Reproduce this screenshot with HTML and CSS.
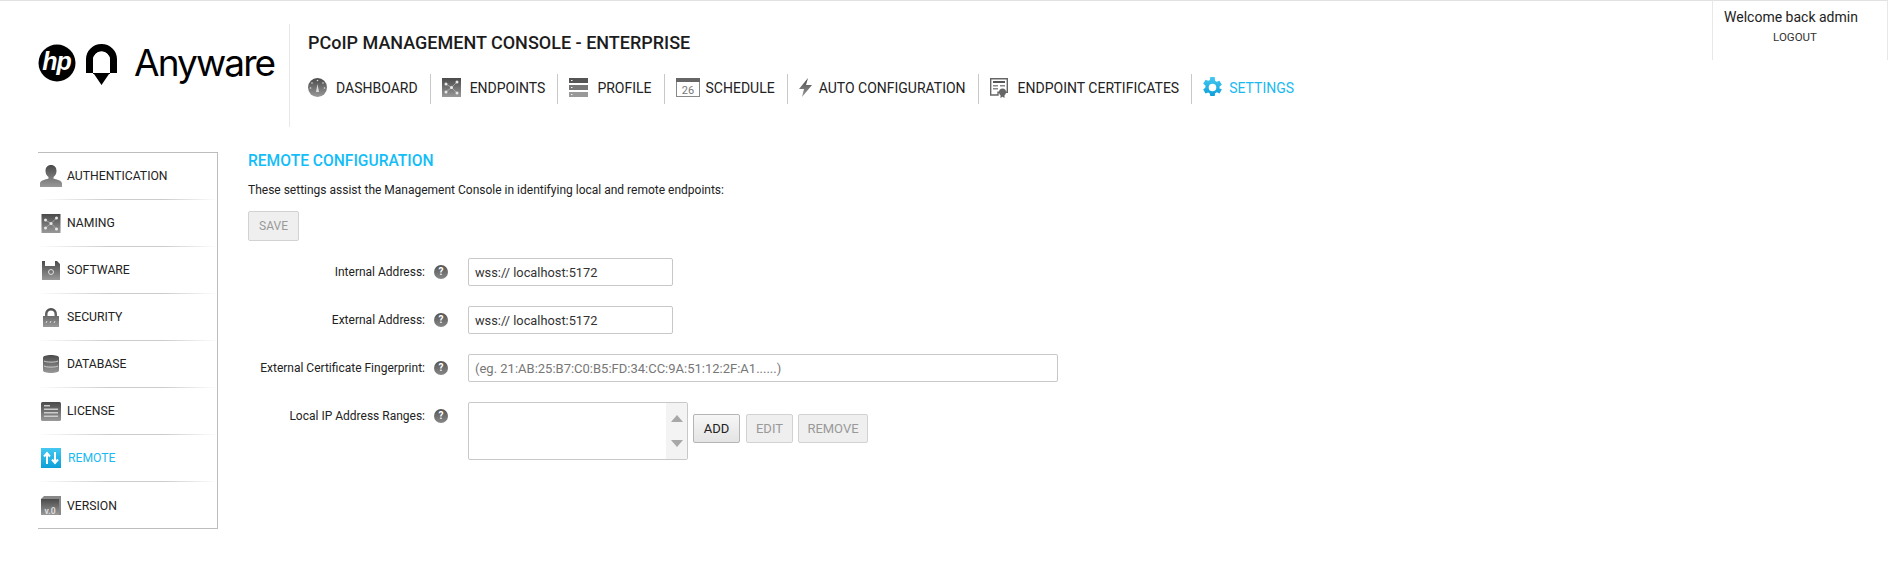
FILE: index.html
```html
<!DOCTYPE html>
<html lang="en">
<head>
<meta charset="utf-8">
<title>PCoIP Management Console</title>
<link rel="stylesheet" href="styles.css">
</head>
<body>
<svg class="defs" width="0" height="0" aria-hidden="true">
  <defs>
    <linearGradient id="g" x1="0" y1="0" x2="0" y2="1"><stop offset="0" stop-color="#4a4a4a"/><stop offset="1" stop-color="#999"/></linearGradient>
    <linearGradient id="b" x1="0" y1="0" x2="0" y2="1"><stop offset="0" stop-color="#45c8f2"/><stop offset="1" stop-color="#0c9fd8"/></linearGradient>
  </defs>
</svg>
<header class="top">
  <div class="logo">
    <svg class="hp" width="38" height="38" viewBox="0 0 38 38"><circle cx="19" cy="19" r="18.500" fill="#000"/><text x="18.500" y="26" text-anchor="middle" class="hp-text">hp</text></svg>
    <svg class="arch" width="31" height="42" viewBox="0 0 31 42"><path d="M0 29V15a15.500 15 0 0 1 31 0v14H24V16a8.500 8.500 0 0 0-17 0v13zM7 29h17v1h-17zM8 30h15l-7.500 11z" fill="#000"/><path d="M7 28V16a8.500 8.500 0 0 1 17 0v12z" fill="#fff"/></svg>
    <span class="word">Anyware</span>
  </div>
  <div class="titles">
    <h1>PCoIP MANAGEMENT CONSOLE - ENTERPRISE</h1>
    <nav class="nav">
      <a class="nav-item i1"><svg width="19" height="19" viewBox="0 0 19 19"><circle cx="9.500" cy="9.500" r="9.500" fill="url(#g)"/><path d="M9.500 6 8 14h3z" fill="#ddd"/><g fill="#ddd"><circle cx="9.500" cy="2.500" r=".8"/><circle cx="4" cy="5" r=".8"/><circle cx="15" cy="5" r=".8"/><circle cx="2.500" cy="10" r=".8"/><circle cx="16.500" cy="10" r=".8"/></g></svg>DASHBOARD</a>
      <a class="nav-item i2"><svg width="19" height="19" viewBox="0 0 19 19"><rect width="19" height="19" fill="url(#g)"/><path d="M4 6l5.500 3.500L15 4M4 14l5.500-4.500L15 15" stroke="#bbb" stroke-width=".7" fill="none"/><g fill="#e8e8e8"><circle cx="4" cy="6" r="1.500"/><circle cx="15" cy="4" r="1.500"/><circle cx="9.500" cy="9.500" r="1.500"/><circle cx="4" cy="14" r="1.500"/><circle cx="15" cy="15" r="1.500"/></g></svg>ENDPOINTS</a>
      <a class="nav-item i3"><svg width="19" height="19" viewBox="0 0 19 19"><rect width="19" height="5" fill="#555"/><rect y="7" width="19" height="5" fill="#777"/><rect y="14" width="19" height="5" fill="#999"/><g fill="#eee"><rect x="2" y="2" width="1.500" height="1"/><rect x="2" y="9" width="1.500" height="1"/><rect x="2" y="16" width="1.500" height="1"/></g></svg>PROFILE</a>
      <a class="nav-item i4"><svg width="24" height="19" viewBox="0 0 24 19"><rect x=".5" y=".5" width="23" height="18" fill="#fff" stroke="#888"/><rect width="24" height="4" fill="#666"/><text x="12" y="16" text-anchor="middle" class="cal">26</text></svg>SCHEDULE</a>
      <a class="nav-item i5"><svg width="13" height="19" viewBox="0 0 13 19"><path d="M9 0 0 11h5l-2 8 10-12H7z" fill="url(#g)"/></svg>AUTO CONFIGURATION</a>
      <a class="nav-item i6"><svg width="18" height="20" viewBox="0 0 18 20"><path d="M.7.7h16.600v13.600H8V17H.7z" fill="#fff" stroke="#666" stroke-width="1.400"/><rect x="3" y="3" width="12" height="2" fill="#555"/><rect x="3" y="7" width="5" height="1.500" fill="#888"/><rect x="10" y="7" width="5" height="1.500" fill="#888"/><rect x="3" y="10" width="5" height="1.500" fill="#888"/><circle cx="12.500" cy="14" r="3.500" fill="#666"/><path d="M10.500 16v4l2-1.300 2 1.300v-4z" fill="#666"/></svg>ENDPOINT CERTIFICATES</a>
      <a class="nav-item i7 on"><svg width="19" height="21" viewBox="2 1 20 22"><path d="M19.400 13a7.700 7.700 0 0 0 0-2l2.400-1.900-2.500-4.300-2.900 1.100a7.700 7.700 0 0 0-1.700-1L14.300 1H9.700l-.5 3a7.700 7.700 0 0 0-1.700 1L4.700 3.800 2.200 8.100 4.600 10a7.700 7.700 0 0 0 0 2l-2.400 2 2.500 4.200 2.800-1a7.700 7.700 0 0 0 1.700 1l.5 2.800h4.600l.5-3a7.700 7.700 0 0 0 1.700-1l2.900 1.200 2.500-4.300zM12 16a4 4 0 1 1 0-8 4 4 0 0 1 0 8z" fill="url(#b)"/></svg>SETTINGS</a>
    </nav>
  </div>
  <div class="user">
    <div class="welcome">Welcome back admin</div>
    <a class="logout">LOGOUT</a>
  </div>
</header>
<div class="page">
  <aside class="side">
    <a class="side-item"><svg width="22" height="22" viewBox="0 0 22 22"><path d="M11 0c3.500 0 5.500 2.500 5.500 6 0 3-1.500 5-3 6v1.500c3 1 8.500 2 8.500 5V22H0v-3.500c0-3 5.500-4 8.500-5V12c-1.500-1-3-3-3-6 0-3.500 2-6 5.500-6z" fill="url(#g)"/></svg><span>AUTHENTICATION</span></a>
    <a class="side-item"><svg width="20" height="19" viewBox="0 0 19 19"><rect width="19" height="19" fill="url(#g)"/><path d="M4 6l5.500 3.500L15 4M4 14l5.500-4.500L15 15" stroke="#bbb" stroke-width=".7" fill="none"/><g fill="#e8e8e8"><circle cx="4" cy="6" r="1.500"/><circle cx="15" cy="4" r="1.500"/><circle cx="9.500" cy="9.500" r="1.500"/><circle cx="4" cy="14" r="1.500"/><circle cx="15" cy="15" r="1.500"/></g></svg><span>NAMING</span></a>
    <a class="side-item"><svg width="18" height="19" viewBox="0 0 18 19"><path d="M0 0h3v5h10V0h2l3 3v16H0z" fill="url(#g)"/><circle cx="9" cy="11" r="2.500" fill="none" stroke="#ddd"/></svg><span>SOFTWARE</span></a>
    <a class="side-item"><svg width="16" height="19" viewBox="0 0 16 19"><path d="M0 8h2V6a6 6 0 0 1 12 0v2h2v11H0zM4.500 8h7V6a3.500 3.500 0 0 0-7 0z" fill="url(#g)"/><path d="M3 15l1-2M7 15l1-2M11 15l1-2" stroke="#ddd" fill="none"/></svg><span>SECURITY</span></a>
    <a class="side-item"><svg width="16" height="18" viewBox="0 0 16 18"><path d="M0 2.500C0 1 3.500 0 8 0s8 1 8 2.500V15.500c0 1.500-3.500 2.500-8 2.500s-8-1-8-2.500z" fill="url(#g)"/><path d="M1 6c2 1.500 12 1.500 14 0M1 11c2 1.500 12 1.500 14 0" stroke="#ccc" fill="none"/></svg><span>DATABASE</span></a>
    <a class="side-item"><svg width="20" height="19" viewBox="0 0 20 19"><rect width="20" height="19" rx="1.500" fill="url(#g)"/><g fill="#ccc"><rect x="3" y="3" width="6" height="1.500"/><rect x="3" y="6.500" width="14" height="1.500"/><rect x="3" y="10" width="14" height="1.500"/><rect x="3" y="13.500" width="14" height="1.500"/></g></svg><span>LICENSE</span></a>
    <a class="side-item on"><svg width="20" height="20" viewBox="0 0 20 20"><rect width="20" height="20" fill="url(#b)"/><path d="M6 16V6M3 8.500 6 5l3 3.500M14 4v10M11 11.500l3 3.500 3-3.500" fill="none" stroke="#fff" stroke-width="2"/></svg><span>REMOTE</span></a>
    <a class="side-item"><svg width="20" height="19" viewBox="0 0 20 19"><path d="M3 0h17v19H0V3z" fill="#888"/><rect y="3" width="18" height="16" fill="url(#g)"/><text x="9" y="18" text-anchor="middle" class="ver">v.0</text></svg><span>VERSION</span></a>
  </aside>
  <main class="main">
    <h2>REMOTE CONFIGURATION</h2>
    <p class="desc">These settings assist the Management Console in identifying local and remote endpoints:</p>
    <button class="btn save" disabled>SAVE</button>
    <form class="form">
      <label class="lbl">Internal Address:</label><span class="help">?</span><input class="field short" value="wss:// localhost:5172">
      <label class="lbl">External Address:</label><span class="help">?</span><input class="field short" value="wss:// localhost:5172">
      <label class="lbl">External Certificate Fingerprint:</label><span class="help">?</span><input class="field long" placeholder="(eg. 21:AB:25:B7:C0:B5:FD:34:CC:9A:51:12:2F:A1......)">
      <label class="lbl">Local IP Address Ranges:</label><span class="help">?</span>
      <div class="ranges">
        <div class="list"><div class="scroll"><i class="up"></i><i class="down"></i></div></div>
        <div class="actions">
          <button type="button" class="btn add">ADD</button>
          <button type="button" class="btn edit" disabled>EDIT</button>
          <button type="button" class="btn remove" disabled>REMOVE</button>
        </div>
      </div>
    </form>
  </main>
</div>
</body>
</html>
```

FILE: styles.css
```css
* { box-sizing: border-box; }
html, body { margin: 0; padding: 0; background: #fff; }
body { font-family: Roboto, "Liberation Sans", sans-serif; color: #222; border-top: 1px solid #e2e2e2; height: 574px; overflow: hidden; }
.defs { position: absolute; }
a { color: inherit; text-decoration: none; }

.top { display: flex; height: 151px; }
.logo { width: 289px; padding: 43px 0 0 38px; display: flex; align-items: flex-start; flex: none; }
.hp { display: block; flex: none; }
.hp-text { font: italic 700 25px "Liberation Sans", sans-serif; fill: #fff; letter-spacing: -1px; }
.arch { display: block; margin-left: 10px; flex: none; }
.word { font: 400 37px/36px Inter, sans-serif; color: #000; letter-spacing: -1.900px; margin: 1px 0 0 17px; }
.titles { margin-top: 23px; height: 103px; border-left: 1px solid #e8e8e8; padding-left: 18px; }
h1 { margin: 9px 0 0; font: 500 18px/20px Roboto, sans-serif; color: #1c1c1c; white-space: nowrap; }
.nav { display: flex; margin-top: 21px; height: 30px; }
.nav-item { display: flex; align-items: center; gap: 9px; padding: 0 12px 3px 11px; font-size: 14px; color: #222; border-right: 1px solid #c8c8c8; white-space: nowrap; }
.i1 { padding-left: 0; }
.i4 { gap: 6px; }
.i5 { gap: 7px; }
.i6 { gap: 10px; }
.i7 { gap: 7px; padding-left: 11px; border-right: 0; }
.nav-item.on { color: #19b9f1; }
.cal { font: 11px Roboto, sans-serif; fill: #777; }
.user { margin-left: auto; width: 176px; height: 59px; border-left: 1px solid #e8e8e8; border-right: 1px solid #e8e8e8; padding: 8px 18px 0 0; text-align: center; }
.welcome { font-size: 14px; line-height: 17px; color: #222; }
.logout { display: block; font-size: 11.500px; line-height: 14px; margin: 4px 0 0 8px; color: #333; }

.page { display: flex; }
.side { margin-left: 38px; width: 180px; height: 377px; border: solid #bdbdbd; border-width: 1px 1px 1px 0; flex: none; }
.side-item { height: 47px; display: flex; align-items: center; font-size: 12.200px; border-bottom: 1px solid; border-image: linear-gradient(90deg, #fff, #ccc 40%, #ccc 70%, #fff) 1; }
.side-item:last-child { border-bottom: 0; }
.side-item svg { margin-left: 2px; width: 22px; flex: none; }
.side-item span { margin-left: 5px; }
.side-item.on { color: #19b9f1; }
.side-item.on span { margin-left: 6px; }
.ver { font: 700 8.500px Roboto, sans-serif; fill: #ddd; }

.main { margin-left: 30px; }
h2 { margin: 0; font: 500 15.600px/18px Roboto, sans-serif; color: #13bdf7; }
.desc { margin: 12px 0 0; font-size: 12px; line-height: 16px; color: #222; }
.btn { height: 29px; padding: 0; background: #efefef; border: 1px solid #d2d2d2; border-radius: 2px; font: 13px Roboto, sans-serif; color: #999; }
.save { display: block; margin-top: 13px; width: 51px; height: 30px; font-size: 12px; }
.form { display: grid; grid-template-columns: 177px 14px auto; column-gap: 9px; grid-auto-rows: 28px; row-gap: 20px; margin-top: 17px; align-items: center; }
.lbl { font-size: 12px; text-align: right; color: #222; white-space: nowrap; }
.help { width: 14px; height: 14px; border-radius: 50%; background: linear-gradient(#555, #888); color: #fff; font: 700 10px/14px Roboto, sans-serif; text-align: center; }
.field { margin-left: 11px; height: 28px; border: 1px solid #c8c8c8; border-radius: 2px; padding: 0 6px; font: 13px Roboto, sans-serif; color: #333; background: #fff; outline: 0; }
.field::placeholder { color: #777; opacity: 1; }
.short { width: 205px; font-size: 12.800px; }
.long { width: 590px; }
.ranges { margin-left: 11px; display: flex; align-items: flex-start; gap: 5px; align-self: start; height: 58px; }
.list { width: 220px; height: 58px; border: 1px solid #c8c8c8; border-radius: 2px; display: flex; justify-content: flex-end; }
.scroll { width: 21px; background: #f3f3f3; display: flex; flex-direction: column; justify-content: space-between; align-items: center; padding: 12px 0; }
.up { border: solid transparent; border-width: 0 6px 7px; border-bottom-color: #a8a8a8; }
.down { border: solid transparent; border-width: 7px 6px 0; border-top-color: #a8a8a8; }
.actions { display: flex; gap: 5px; margin-top: 12px; }
.add { width: 47px; margin-right: 1px; color: #222; background: linear-gradient(#f6f6f6, #e4e4e4); border-color: #b5b5b5; }
.edit { width: 47px; }
.remove { width: 70px; }
```
